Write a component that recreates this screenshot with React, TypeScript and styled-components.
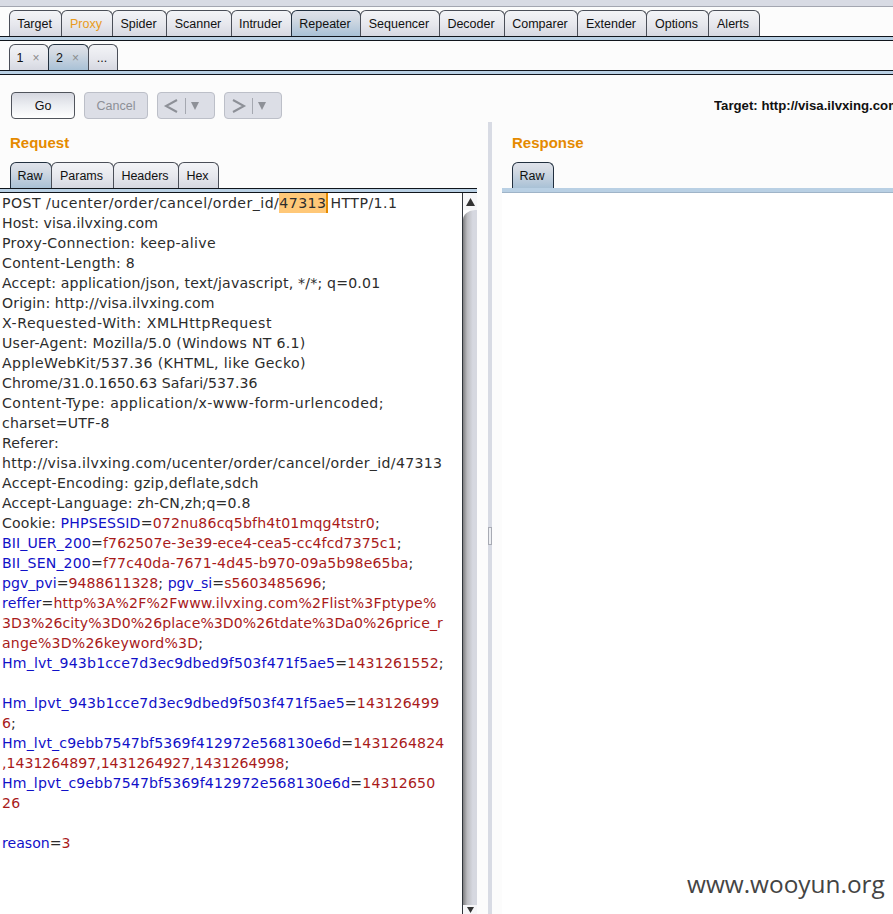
import React from "react";
import styled, { createGlobalStyle } from "styled-components";

const Global = createGlobalStyle`
  html, body { margin: 0; padding: 0; background: #fcfcfc; }
  #root { width: 893px; height: 914px; overflow: hidden; }
`;

const Page = styled.div`
  position: relative;
  width: 893px;
  height: 914px;
  overflow: hidden;
  display: flex;
  flex-direction: column;
  background: #fcfcfc;
  font-family: "Liberation Sans", Arial, sans-serif;
  font-size: 12.5px;
  color: #111;
`;

const TopStrip = styled.div`
  height: 6px;
  background: #d8dbe4;
  border-bottom: 1px solid #a3a6b0;
  flex: none;
`;

const TabRow = styled.div<{ $top: number; $left?: number }>`
  box-sizing: border-box;
  display: flex;
  align-items: flex-end;
  flex: none;
  height: ${(p) => 26 + p.$top}px;
  padding-top: ${(p) => p.$top}px;
  padding-left: ${(p) => p.$left ?? 9}px;
`;

const Tab = styled.div<{ $w: number; $active?: boolean; $orange?: boolean }>`
  box-sizing: border-box;
  width: ${(p) => p.$w}px;
  height: 26px;
  padding-right: 2px;
  display: flex;
  align-items: center;
  justify-content: center;
  gap: 9px;
  margin-right: -1px;
  border: 1px solid ${(p) => (p.$active ? "#22303f" : "#4a4e58")};
  border-bottom: none;
  border-radius: 6px 6px 0 0;
  color: ${(p) => (p.$orange ? "#e89a20" : "#111")};
  background: ${(p) =>
    p.$active
      ? "linear-gradient(#dfe2ea 0%, #d3dae3 30%, #a9c1d6 100%)"
      : "linear-gradient(#f3f4f7 0%, #e6e7ed 55%, #d6d8e1 100%)"};
`;

const Close = styled.span`
  color: #8b8b8b;
  font-size: 12px;
`;

const Rule = styled.div`
  flex: none;
  height: 3px;
  background: #b9d0e4;
  border-top: 1px solid #10151c;
  border-bottom: 1px solid #10151c;
`;

const Toolbar = styled.div`
  flex: none;
  height: 27px;
  margin-top: 17px;
  padding-left: 11px;
  display: flex;
  align-items: center;
  gap: 9px;
`;

const Button = styled.div<{ $w: number; $primary?: boolean }>`
  box-sizing: border-box;
  width: ${(p) => p.$w}px;
  height: 27px;
  display: flex;
  align-items: center;
  justify-content: center;
  border-radius: 4px;
  border: 1px solid ${(p) => (p.$primary ? "#50545c" : "#bcbfc8")};
  color: ${(p) => (p.$primary ? "#111" : "#8d9097")};
  background: ${(p) =>
    p.$primary
      ? "linear-gradient(#d5d7df 0%, #eceef2 50%, #ffffff 100%)"
      : "#dcdee6"};
`;

const Target = styled.div`
  margin-left: auto;
  white-space: nowrap;
  font-weight: 700;
  font-size: 13.2px;
  width: 179px;
  overflow: hidden;
`;

const Panes = styled.div`
  flex: 1;
  min-height: 0;
  margin-top: 3px;
  display: grid;
  grid-template-columns: 477px 11px 4px 10px 1fr;
`;

const Pane = styled.div<{ $col?: number }>`
  grid-column: ${(p) => p.$col ?? 1};
  display: flex;
  flex-direction: column;
  min-width: 0;
  min-height: 0;
`;

const Heading = styled.div`
  flex: none;
  height: 40px;
  padding: 12px 0 0 10px;
  box-sizing: border-box;
  font-size: 15px;
  line-height: 17px;
  font-weight: 700;
  color: #e58a00;
`;

const Splitter = styled.div`
  grid-column: 3;
  background: #d8dbe4;
  display: flex;
  align-items: center;
  justify-content: center;
`;

const Grip = styled.div`
  width: 4px;
  height: 18px;
  border: 1px solid #a8abb4;
  background: #eceef2;
  box-sizing: border-box;
  margin-top: 36px;
`;

const EditorWrap = styled.div`
  flex: 1;
  min-height: 0;
  display: flex;
  background: #fff;
`;

const Editor = styled.div`
  flex: 1;
  padding-left: 2px;
  font-family: "DejaVu Sans", Verdana, sans-serif;
  font-size: 14.1px;
  line-height: 20px;
  color: #2c2c2c;
  white-space: pre;
  overflow: hidden;
`;

const Line = styled.div<{ $track?: number }>`
  height: 20px;
  letter-spacing: ${(p) => p.$track ?? 0}px;
`;

const Tok = styled.span<{ $k: "n" | "v" }>`
  color: ${(p) => (p.$k === "n" ? "#1010c8" : "#a81a1a")};
`;

const Hit = styled.span`
  background: #ffc878;
  border-right: 2px solid #e58a00;
  margin-right: -3px;
  display: inline-block;
  height: 20px;
  vertical-align: top;
`;

const Scrollbar = styled.div`
  flex: none;
  width: 15px;
  display: flex;
  flex-direction: column;
  border-left: 1px solid #30343a;
  box-sizing: border-box;
`;

const Arrow = styled.div<{ $h: number }>`
  flex: none;
  height: ${(p) => p.$h}px;
  display: flex;
  align-items: center;
  justify-content: center;
  background: #f6f6f8;
`;

const Thumb = styled.div`
  flex: 1;
  border-radius: 12px 0 0 0 / 10px 0 10px 0;
  background: linear-gradient(90deg, #7e7e80 0%, #bcbcc0 30%, #d6d8e0 70%, #d6d8e0 100%);
`;

const ResponseBody = styled.div`
  flex: 1;
  background: #fff;
`;

const RespRule = styled.div`
  flex: none;
  height: 5px;
  background: #b9d0e4;
  border-bottom: 1px solid #9fb4c8;
  box-sizing: border-box;
`;

const Watermark = styled.div`
  position: absolute;
  left: 687px;
  top: 867px;
  font-family: "Open Sans", "Noto Sans", sans-serif;
  font-size: 24.4px;
  line-height: 34px;
  color: #444;
  white-space: nowrap;
`;

const Nav = ({ dir }: { dir: "l" | "r" }) => (
  <svg width="46" height="18" viewBox="0 0 46 18">
    <path
      d={dir === "l" ? "M14 3 L3 9 L14 15" : "M3 3 L14 9 L3 15"}
      fill="none"
      stroke="#8d9097"
      strokeWidth="2"
    />
    <path d="M22.5 1V17" stroke="#a5a8b0" strokeWidth="1" />
    <path d="M28 5H36L32 13Z" fill="#8d9097" />
  </svg>
);

type Seg = [string, "t" | "n" | "v"];
const t = (s: string): Seg[] => [[s, "t"]];

const lines: [number, Seg[]][] = [
  [0.05, t("Host: visa.ilvxing.com")],
  [0.32, t("Proxy-Connection: keep-alive")],
  [0.3, t("Content-Length: 8")],
  [0.19, t("Accept: application/json, text/javascript, */*; q=0.01")],
  [0.13, t("Origin: http://visa.ilvxing.com")],
  [0.56, t("X-Requested-With: XMLHttpRequest")],
  [0.3, t("User-Agent: Mozilla/5.0 (Windows NT 6.1)")],
  [0.4, t("AppleWebKit/537.36 (KHTML, like Gecko)")],
  [0.06, t("Chrome/31.0.1650.63 Safari/537.36")],
  [0.48, t("Content-Type: application/x-www-form-urlencoded;")],
  [0.15, t("charset=UTF-8")],
  [0.12, t("Referer:")],
  [0.34, t("http://visa.ilvxing.com/ucenter/order/cancel/order_id/47313")],
  [0.26, t("Accept-Encoding: gzip,deflate,sdch")],
  [0.2, t("Accept-Language: zh-CN,zh;q=0.8")],
  [0.19, [["Cookie: ", "t"], ["PHPSESSID", "n"], ["=", "t"], ["072nu86cq5bfh4t01mqg4tstr0", "v"], [";", "t"]]],
  [0.1, [["BII_UER_200", "n"], ["=", "t"], ["f762507e-3e39-ece4-cea5-cc4fcd7375c1", "v"], [";", "t"]]],
  [0.14, [["BII_SEN_200", "n"], ["=", "t"], ["f77c40da-7671-4d45-b970-09a5b98e65ba", "v"], [";", "t"]]],
  [0.02, [["pgv_pvi", "n"], ["=", "t"], ["9488611328", "v"], ["; ", "t"], ["pgv_si", "n"], ["=", "t"], ["s5603485696", "v"], [";", "t"]]],
  [0.16, [["reffer", "n"], ["=", "t"], ["http%3A%2F%2Fwww.ilvxing.com%2Flist%3Fptype%", "v"]]],
  [0.06, [["3D3%26city%3D0%26place%3D0%26tdate%3Da0%26price_r", "v"]]],
  [0.2, [["ange%3D%26keyword%3D", "v"], [";", "t"]]],
  [0.19, [["Hm_lvt_943b1cce7d3ec9dbed9f503f471f5ae5", "n"], ["=", "t"], ["1431261552", "v"], [";", "t"]]],
  [0, []],
  [0.2, [["Hm_lpvt_943b1cce7d3ec9dbed9f503f471f5ae5", "n"], ["=", "t"], ["143126499", "v"]]],
  [0, [["6", "v"], [";", "t"]]],
  [0.16, [["Hm_lvt_c9ebb7547bf5369f412972e568130e6d", "n"], ["=", "t"], ["1431264824", "v"]]],
  [0, [[",1431264897,1431264927,1431264998", "v"], [";", "t"]]],
  [0.16, [["Hm_lpvt_c9ebb7547bf5369f412972e568130e6d", "n"], ["=", "t"], ["14312650", "v"]]],
  [0.3, [["26", "v"]]],
  [0, []],
  [0, [["reason", "n"], ["=", "t"], ["3", "v"]]],
];

const mainTabs: [string, number][] = [
  ["Target", 53], ["Proxy", 52], ["Spider", 55], ["Scanner", 66], ["Intruder", 61],
  ["Repeater", 70], ["Sequencer", 80], ["Decoder", 66], ["Comparer", 74],
  ["Extender", 70], ["Options", 63], ["Alerts", 52],
];

const reqTabs: [string, number][] = [["Raw", 42], ["Params", 63], ["Headers", 66], ["Hex", 41]];

export default function App() {
  return (
    <Page>
      <Global />
      <TopStrip />
      <TabRow $top={3}>
        {mainTabs.map(([n, w]) => (
          <Tab key={n} $w={w} $active={n === "Repeater"} $orange={n === "Proxy"}>{n}</Tab>
        ))}
      </TabRow>
      <Rule />
      <TabRow $top={3}>
        <Tab $w={40}>1<Close>×</Close></Tab>
        <Tab $w={41} $active>2<Close>×</Close></Tab>
        <Tab $w={30}>...</Tab>
      </TabRow>
      <Rule />
      <Toolbar>
        <Button $w={64} $primary>Go</Button>
        <Button $w={64}>Cancel</Button>
        <Button $w={58}><Nav dir="l" /></Button>
        <Button $w={58}><Nav dir="r" /></Button>
        <Target>Target: http://visa.ilvxing.com</Target>
      </Toolbar>
      <Panes>
        <Pane>
          <Heading>Request</Heading>
          <TabRow $top={0} $left={10}>
            {reqTabs.map(([n, w]) => (
              <Tab key={n} $w={w} $active={n === "Raw"}>{n}</Tab>
            ))}
          </TabRow>
          <Rule />
          <EditorWrap>
            <Editor>
              <Line $track={0.47}>POST /ucenter/order/cancel/order_id/<Hit>47313</Hit> HTTP/1.1</Line>
              {lines.map(([track, segs], i) => (
                <Line key={i} $track={track}>
                  {segs.map(([s, k], j) => (k === "t" ? <span key={j}>{s}</span> : <Tok key={j} $k={k}>{s}</Tok>))}
                </Line>
              ))}
            </Editor>
            <Scrollbar>
              <Arrow $h={17}>
                <svg width="9" height="8" viewBox="0 0 9 8"><path d="M4.5 0L9 8H0Z" fill="#333" /></svg>
              </Arrow>
              <Thumb />
              <Arrow $h={9}>
                <svg width="7" height="6" viewBox="0 0 7 6"><path d="M0 0H7L3.5 6Z" fill="#333" /></svg>
              </Arrow>
            </Scrollbar>
          </EditorWrap>
        </Pane>
        <Splitter><Grip /></Splitter>
        <Pane $col={5}>
          <Heading>Response</Heading>
          <TabRow $top={0} $left={10}>
            <Tab $w={42} $active>Raw</Tab>
          </TabRow>
          <RespRule />
          <ResponseBody />
        </Pane>
      </Panes>
      <Watermark>www.wooyun.org</Watermark>
    </Page>
  );
}
